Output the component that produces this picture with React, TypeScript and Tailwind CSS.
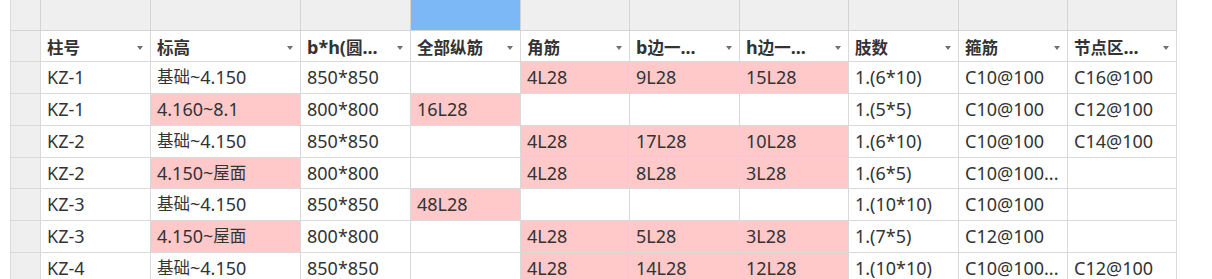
const FONT = "font-['Noto_Sans','Noto_Sans_CJK_SC',sans-serif]";

const GRID =
  'grid grid-cols-[30px_110px_150px_110px_110px_109px_110px_109px_110px_109px_109px]';

const HEADERS = ['柱号', '标高', 'b*h(圆...', '全部纵筋', '角筋', 'b边一...', 'h边一...', '肢数', '箍筋', '节点区...'];

type Cell = { v: string; pink?: boolean };

// p = pink (conditional format) cell
const p = (v: string): Cell => ({ v, pink: true });
const c = (v = ''): Cell => ({ v });

const ROWS: { h: string; cells: Cell[] }[] = [
  { h: 'h-[32px]', cells: [c('KZ-1'), c('基础~4.150'), c('850*850'), c(), p('4L28'), p('9L28'), p('15L28'), c('1.(6*10)'), c('C10@100'), c('C16@100')] },
  { h: 'h-[32px]', cells: [c('KZ-1'), p('4.160~8.1'), c('800*800'), p('16L28'), c(), c(), c(), c('1.(5*5)'), c('C10@100'), c('C12@100')] },
  { h: 'h-[32px]', cells: [c('KZ-2'), c('基础~4.150'), c('850*850'), c(), p('4L28'), p('17L28'), p('10L28'), c('1.(6*10)'), c('C10@100'), c('C14@100')] },
  { h: 'h-[31px]', cells: [c('KZ-2'), p('4.150~屋面'), c('800*800'), c(), p('4L28'), p('8L28'), p('3L28'), c('1.(6*5)'), c('C10@100...'), c()] },
  { h: 'h-[32px]', cells: [c('KZ-3'), c('基础~4.150'), c('850*850'), p('48L28'), c(), c(), c(), c('1.(10*10)'), c('C10@100'), c()] },
  { h: 'h-[32px]', cells: [c('KZ-3'), p('4.150~屋面'), c('800*800'), c(), p('4L28'), p('5L28'), p('3L28'), c('1.(7*5)'), c('C12@100'), c()] },
  { h: 'h-[32px]', cells: [c('KZ-4'), c('基础~4.150'), c('850*850'), c(), p('4L28'), p('14L28'), p('12L28'), c('1.(10*10)'), c('C10@100...'), c('C12@100')] },
];

// the sheet font draws han glyphs a bit smaller than latin ones
function Txt({ s }: { s: string }) {
  const parts = s.match(/[\u4e00-\u9fff]+|[^\u4e00-\u9fff]+/g) ?? [];
  return (
    <>
      {parts.map((part, i) =>
        /[\u4e00-\u9fff]/.test(part) ? (
          <span key={i} className="text-[16.5px]">
            {part}
          </span>
        ) : (
          <span key={i}>{part}</span>
        )
      )}
    </>
  );
}

function DropArrow() {
  return (
    <span className="w-0 h-0 border-l-[3px] border-r-[3px] border-t-[4px] border-l-transparent border-r-transparent border-t-[#707070] shrink-0" />
  );
}

export default function App() {
  return (
    <div className={`h-[279px] w-[1212px] overflow-hidden bg-white text-[#333] text-[18px] ${FONT}`}>
      <div className="ml-[10px] w-[1167px] border-l border-[#d9d9d9]">
        {/* column letter row */}
        <div className={`${GRID} h-[31px]`}>
          {Array.from({ length: 11 }).map((_, i) => (
            <div
              key={i}
              className={`border-r border-b border-[#d4d4d4] ${i === 4 ? 'bg-[#7db8f6]' : 'bg-[#efefef]'}`}
            />
          ))}
        </div>

        {/* header row with filters */}
        <div className={`${GRID} h-[31px]`}>
          <div className="bg-[#efefef] border-r border-b border-[#d9d9d9]" />
          {HEADERS.map((t) => (
            <div
              key={t}
              className="flex items-center justify-between gap-1 pl-[6px] pr-[7px] pt-[3px] font-bold whitespace-nowrap overflow-hidden border-r border-b border-[#d9d9d9]"
            >
              <span className="min-w-0 overflow-hidden">
                <Txt s={t} />
              </span>
              <DropArrow />
            </div>
          ))}
        </div>

        {/* data */}
        {ROWS.map((row, ri) => (
          <div key={ri} className={`${GRID} ${row.h}`}>
            <div className="bg-[#efefef] border-r border-b border-[#d9d9d9]" />
            {row.cells.map((cell, ci) => (
              <div
                key={ci}
                className={`flex items-center pl-[6px] whitespace-nowrap overflow-hidden border-r border-b border-[#d9d9d9] ${
                  cell.pink ? 'bg-[#ffc9c9]' : 'bg-white'
                }`}
              >
                <Txt s={cell.v} />
              </div>
            ))}
          </div>
        ))}
      </div>
    </div>
  );
}
